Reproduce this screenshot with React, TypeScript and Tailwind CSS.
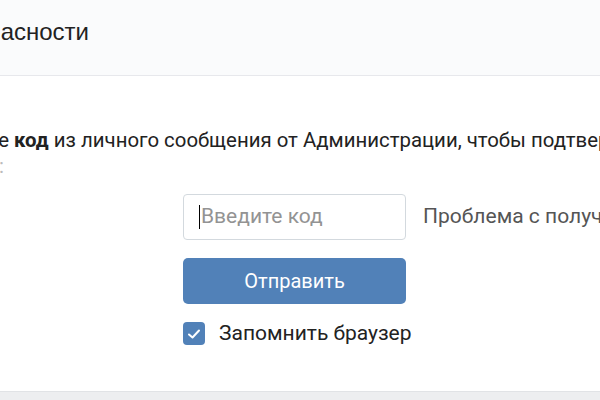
import React from 'react';

const font = { fontFamily: 'Roboto, "Noto Sans", sans-serif' };

const App: React.FC = () => {
    return (
        <div className="w-[600px] h-[400px] overflow-hidden bg-[#edeef0] flex flex-col" style={font}>
            {/* Header */}
            <div className="h-[76px] shrink-0 bg-[#fafbfc] border-b border-[#e7e8ec] flex items-start pt-[17px]">
                <div className="w-[89px] shrink-0 flex justify-end whitespace-nowrap">
                    <span className="text-[24px] leading-[30px] text-[#222222]" style={{ fontFamily: '"Liberation Sans", Arial, sans-serif' }}>
                        Проверка безопасности
                    </span>
                </div>
            </div>

            {/* Body */}
            <div className="h-[316px] shrink-0 bg-white border-b border-[#e1e3e6]">
                <div className="pt-[51px] whitespace-nowrap text-[20.4px] leading-[26px] text-[#222222]">
                    <div className="flex">
                        <div className="w-[9px] shrink-0 flex justify-end">
                            <span>Введите</span>
                        </div>
                        <span>&nbsp;<b className="font-bold">код</b> из личного сообщения от Администрации, чтобы подтвердить</span>
                    </div>
                    <div className="flex">
                        <div className="w-[4px] shrink-0 flex justify-end">
                            <span className="text-[#bbbbbb]">:</span>
                        </div>
                    </div>
                </div>

                <div className="ml-[183px] mt-[15px] flex items-center gap-[17px] whitespace-nowrap">
                    <div className="w-[223px] h-[46px] shrink-0 rounded-[4px] border border-[#d3d9de] flex items-center pl-[15px]">
                        <span className="w-px h-[24px] bg-black mr-[1px]" />
                        <span className="text-[21px] text-[#939393]">Введите код</span>
                    </div>
                    <span className="text-[21px] text-[#555555]">Проблема с получением кода?</span>
                </div>

                <button className="ml-[183px] mt-[18px] w-[223px] h-[46px] rounded-[5px] bg-[#5181b8] text-white text-[20px] flex items-center justify-center">
                    Отправить
                </button>

                <div className="ml-[183px] mt-[17px] flex items-center gap-[14px] whitespace-nowrap">
                    <span className="w-[22px] h-[23px] shrink-0 rounded-[4px] bg-[#5181b8] flex items-center justify-center">
                        <svg width="14" height="12" viewBox="0 0 14 12" fill="none">
                            <path d="M2 6.5 L5.5 9.5 L12 2.5" stroke="white" strokeWidth="2" strokeLinecap="round" strokeLinejoin="round" />
                        </svg>
                    </span>
                    <span className="text-[21px] leading-[25px] text-[#222222]">Запомнить браузер</span>
                </div>
            </div>
        </div>
    );
};

export default App;
